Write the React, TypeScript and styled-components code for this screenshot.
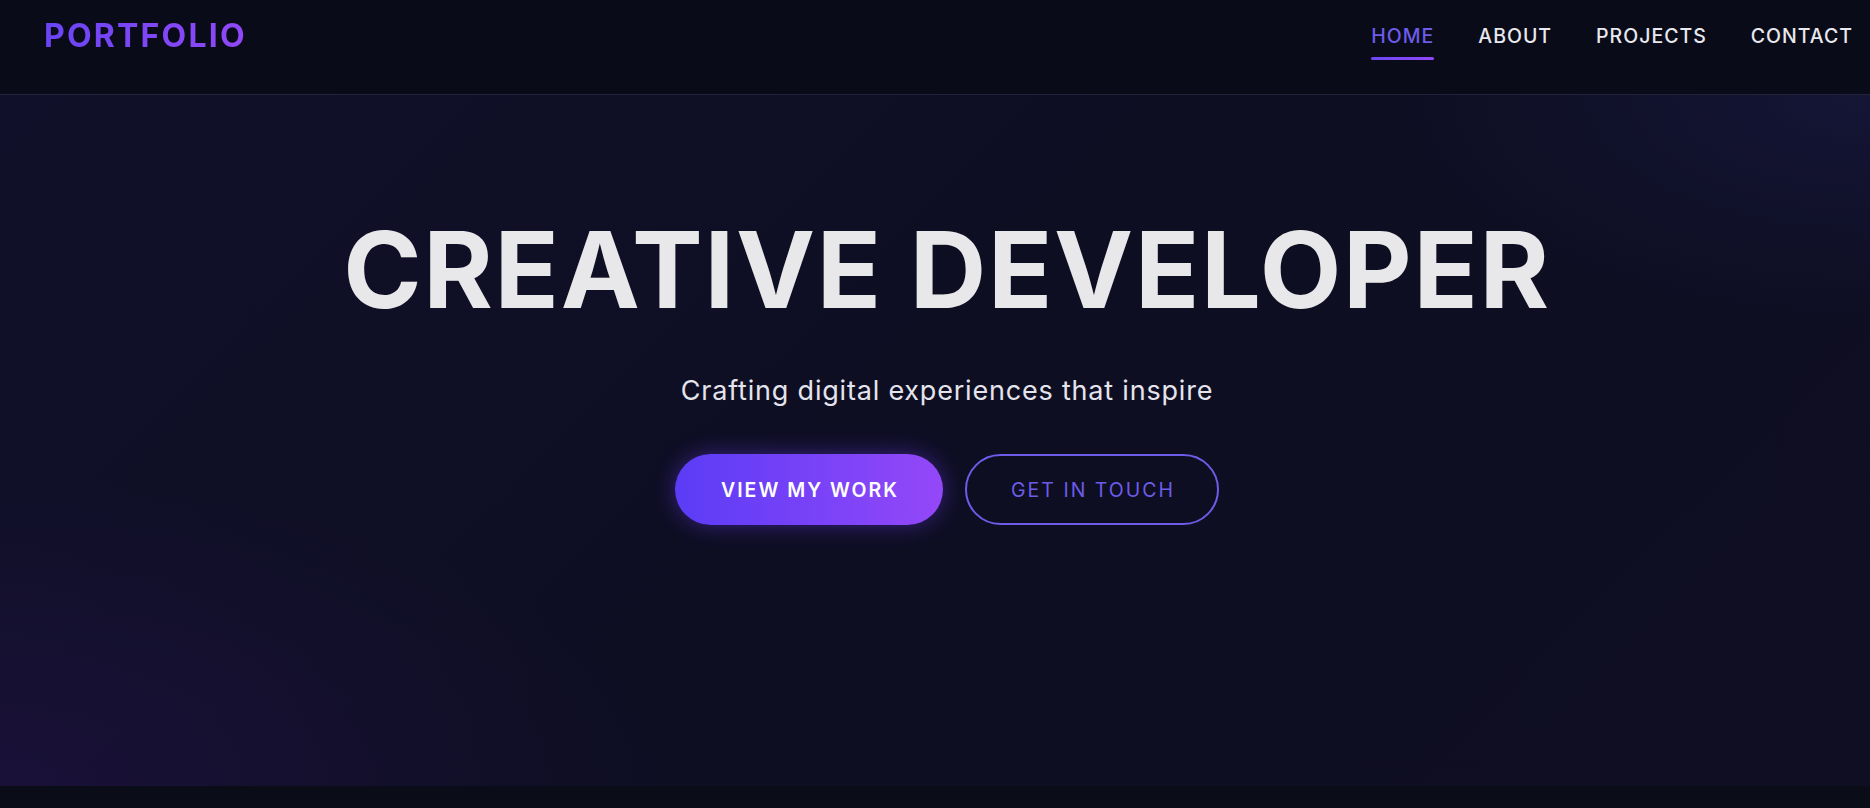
import React from "react";
import styled, { createGlobalStyle } from "styled-components";

const GlobalStyle = createGlobalStyle`
  * { box-sizing: border-box; }
  html, body { margin: 0; padding: 0; background: #0a0c18; }
  body { font-family: Inter, "Noto Sans", sans-serif; color: #e8e8ee; overflow: hidden; }
`;

const Page = styled.div`
  width: 1870px;
  height: 808px;
  display: flex;
  flex-direction: column;
  background: #0a0c18;
`;

const Header = styled.header`
  height: 95px;
  flex: none;
  display: flex;
  justify-content: space-between;
  align-items: flex-start;
  padding: 16px 17px 0 44px;
  background: #0a0b18;
  border-bottom: 1px solid #22233a;
`;

const Logo = styled.div`
  font-size: 32px;
  line-height: 40px;
  font-weight: 700;
  letter-spacing: 2.2px;
  background: linear-gradient(90deg, #6a45f5, #9148f7);
  -webkit-background-clip: text;
  background-clip: text;
  color: transparent;
`;

const Nav = styled.nav`
  display: flex;
  gap: 44px;
  padding-top: 6px;
`;

const NavLink = styled.a<{ $active?: boolean }>`
  position: relative;
  font-size: 19.5px;
  line-height: 28px;
  font-weight: 500;
  letter-spacing: 1px;
  color: ${(p) => (p.$active ? "#6c5ce7" : "#e8e8ee")};
  text-decoration: none;
  cursor: pointer;
  &::after {
    content: "";
    position: absolute;
    left: 0;
    right: 0;
    top: 35px;
    height: 3px;
    border-radius: 2px;
    background: linear-gradient(90deg, #6c47f5, #9148f7);
    opacity: ${(p) => (p.$active ? 1 : 0)};
  }
`;

const Hero = styled.section`
  height: 691px;
  flex: none;
  display: flex;
  flex-direction: column;
  align-items: center;
  padding: 117px 0 0 24px;
  background:
    radial-gradient(ellipse 50% 65% at 0% 100%, rgba(38, 20, 78, 0.45), transparent 70%),
    radial-gradient(ellipse 35% 45% at 100% 0%, rgba(28, 30, 78, 0.45), transparent 70%),
    linear-gradient(135deg, #11102a 0%, #0e0e23 45%, #0f0e22 100%);
`;

const Title = styled.h1`
  margin: 0;
  font-size: 106px;
  line-height: 1.1;
  font-weight: 700;
  letter-spacing: 1.7px;
  color: #e8e8ea;
  white-space: nowrap;
`;

const Subtitle = styled.p`
  margin: 42px 0 0;
  font-size: 27px;
  line-height: 1.5;
  font-weight: 400;
  letter-spacing: 0.8px;
  color: #e4e4ec;
`;

const Actions = styled.div`
  display: flex;
  gap: 22px;
  margin-top: 43px;
`;

const Button = styled.a<{ $primary?: boolean }>`
  display: inline-flex;
  align-items: center;
  justify-content: center;
  height: 71px;
  padding: 0 42px 0 44px;
  border-radius: 999px;
  font-size: 19.5px;
  letter-spacing: 2px;
  font-weight: ${(p) => (p.$primary ? 600 : 400)};
  text-decoration: none;
  cursor: pointer;
  border: 2px solid ${(p) => (p.$primary ? "transparent" : "#6c5ce7")};
  color: ${(p) => (p.$primary ? "#ffffff" : "#6c5ce7")};
  background: ${(p) =>
    p.$primary ? "linear-gradient(90deg, #5b3cf6, #9448f8) border-box" : "transparent"};
  box-shadow: ${(p) => (p.$primary ? "0 0 22px rgba(108, 60, 245, 0.45)" : "none")};
`;

const NextSection = styled.section`
  flex: 1;
  background: #0a0c18;
`;

export default function App() {
  return (
    <Page>
      <GlobalStyle />
      <Header>
        <Logo>PORTFOLIO</Logo>
        <Nav>
          <NavLink $active>HOME</NavLink>
          <NavLink>ABOUT</NavLink>
          <NavLink>PROJECTS</NavLink>
          <NavLink>CONTACT</NavLink>
        </Nav>
      </Header>
      <Hero>
        <Title>CREATIVE DEVELOPER</Title>
        <Subtitle>Crafting digital experiences that inspire</Subtitle>
        <Actions>
          <Button $primary>VIEW MY WORK</Button>
          <Button>GET IN TOUCH</Button>
        </Actions>
      </Hero>
      <NextSection />
    </Page>
  );
}
